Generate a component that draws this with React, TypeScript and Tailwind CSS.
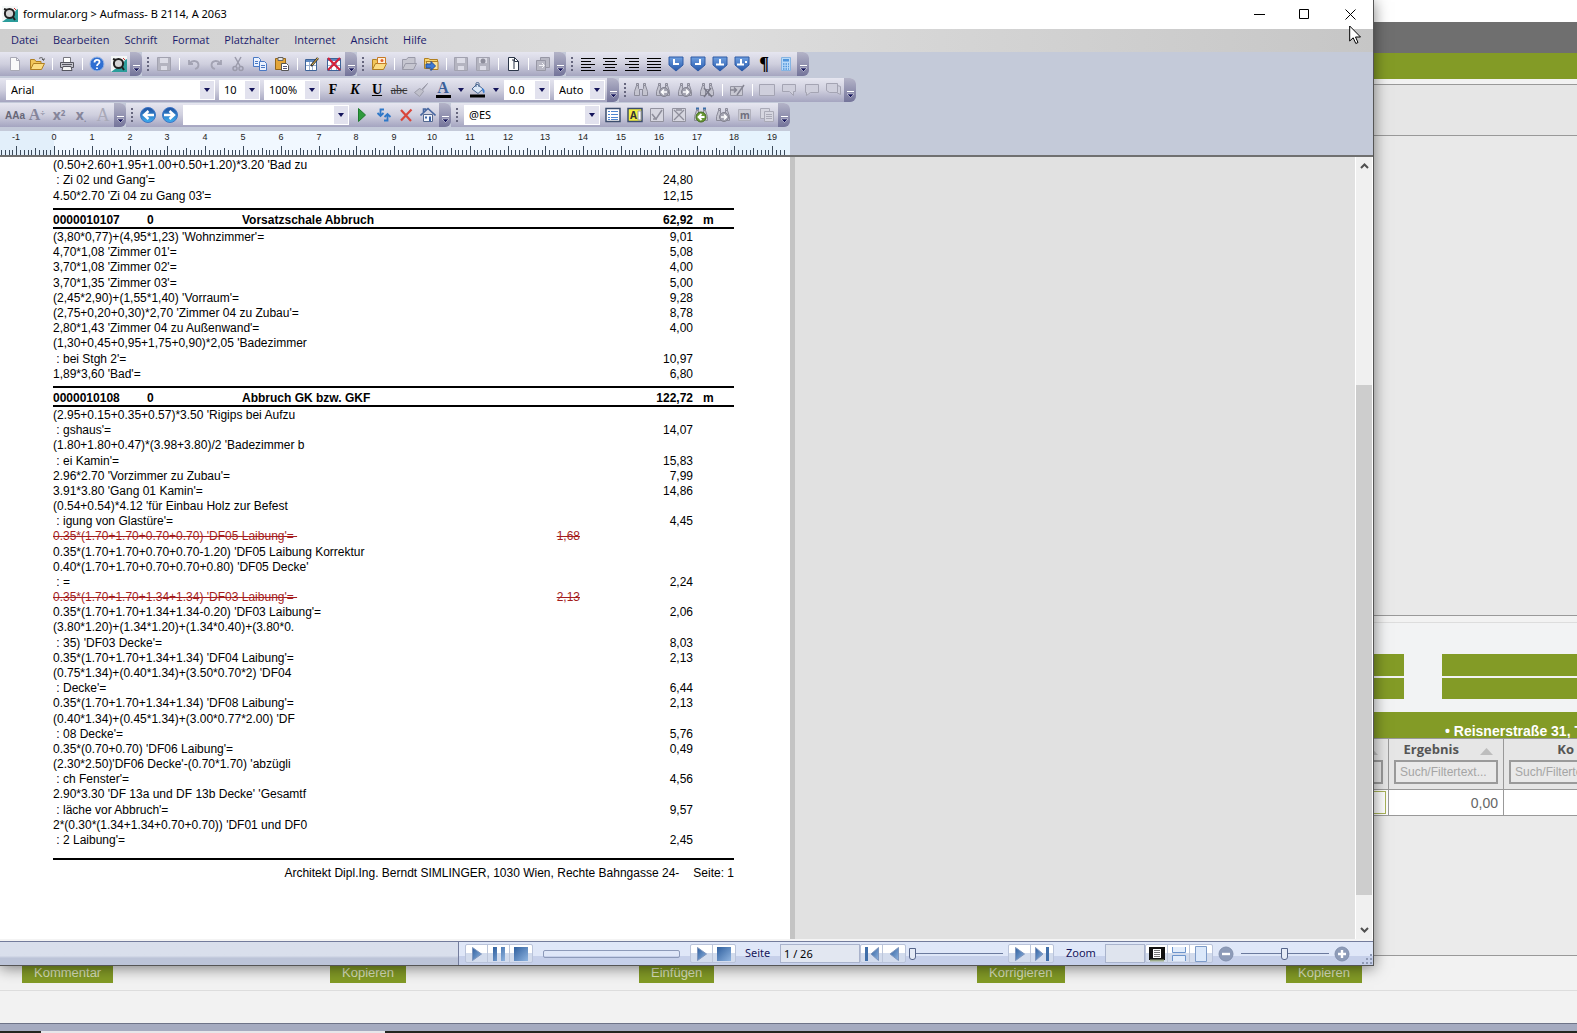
import { useState, type ReactNode } from 'react'

const TICK = 3.78 // one millimetre on the ruler
const RULER_ZERO = 54

interface Line {
    text: string
    amount?: string
    struck?: boolean
}

interface Section {
    code?: string
    title?: string
    total?: string
    height: string
    lines: Line[]
}

const SECTIONS: Section[] = [
    {
        height: 'h-[46px]',
        lines: [
            { text: "(0.50+2.60+1.95+1.00+0.50+1.20)*3.20 'Bad zu" },
            { text: " : Zi 02 und Gang'=", amount: '24,80' },
            { text: "4.50*2.70 'Zi 04 zu Gang 03'=", amount: '12,15' },
        ],
    },
    {
        code: '0000010107',
        title: 'Vorsatzschale Abbruch',
        total: '62,92',
        height: 'h-[173px]',
        lines: [
            { text: "(3,80*0,77)+(4,95*1,23) 'Wohnzimmer'=", amount: '9,01' },
            { text: "4,70*1,08 'Zimmer 01'=", amount: '5,08' },
            { text: "3,70*1,08 'Zimmer 02'=", amount: '4,00' },
            { text: "3,70*1,35 'Zimmer 03'=", amount: '5,00' },
            { text: "(2,45*2,90)+(1,55*1,40) 'Vorraum'=", amount: '9,28' },
            { text: "(2,75+0,20+0,30)*2,70 'Zimmer 04 zu Zubau'=", amount: '8,78' },
            { text: "2,80*1,43 'Zimmer 04 zu Außenwand'=", amount: '4,00' },
            { text: "(1,30+0,45+0,95+1,75+0,90)*2,05 'Badezimmer" },
            { text: " : bei Stgh 2'=", amount: '10,97' },
            { text: "1,89*3,60 'Bad'=", amount: '6,80' },
        ],
    },
    {
        code: '0000010108',
        title: 'Abbruch GK bzw. GKF',
        total: '122,72',
        height: 'h-[461px]',
        lines: [
            { text: "(2.95+0.15+0.35+0.57)*3.50 'Rigips bei Aufzu" },
            { text: " : gshaus'=", amount: '14,07' },
            { text: "(1.80+1.80+0.47)*(3.98+3.80)/2 'Badezimmer b" },
            { text: " : ei Kamin'=", amount: '15,83' },
            { text: "2.96*2.70 'Vorzimmer zu Zubau'=", amount: '7,99' },
            { text: "3.91*3.80 'Gang 01 Kamin'=", amount: '14,86' },
            { text: "(0.54+0.54)*4.12 'für Einbau Holz zur Befest" },
            { text: " : igung von Glastüre'=", amount: '4,45' },
            { text: "0.35*(1.70+1.70+0.70+0.70) 'DF05 Laibung'= ", amount: '1,68', struck: true },
            { text: "0.35*(1.70+1.70+0.70+0.70-1.20) 'DF05 Laibung Korrektur" },
            { text: "0.40*(1.70+1.70+0.70+0.70+0.80) 'DF05 Decke'" },
            { text: ' : =', amount: '2,24' },
            { text: "0.35*(1.70+1.70+1.34+1.34) 'DF03 Laibung'= ", amount: '2,13', struck: true },
            { text: "0.35*(1.70+1.70+1.34+1.34-0.20) 'DF03 Laibung'=", amount: '2,06' },
            { text: '(3.80*1.20)+(1.34*1.20)+(1.34*0.40)+(3.80*0.' },
            { text: " : 35) 'DF03 Decke'=", amount: '8,03' },
            { text: "0.35*(1.70+1.70+1.34+1.34) 'DF04 Laibung'=", amount: '2,13' },
            { text: "(0.75*1.34)+(0.40*1.34)+(3.50*0.70*2) 'DF04" },
            { text: " : Decke'=", amount: '6,44' },
            { text: "0.35*(1.70+1.70+1.34+1.34) 'DF08 Laibung'=", amount: '2,13' },
            { text: "(0.40*1.34)+(0.45*1.34)+(3.00*0.77*2.00) 'DF" },
            { text: " : 08 Decke'=", amount: '5,76' },
            { text: "0.35*(0.70+0.70) 'DF06 Laibung'=", amount: '0,49' },
            { text: "(2.30*2.50)'DF06 Decke'-(0.70*1.70) 'abzügli" },
            { text: " : ch Fenster'=", amount: '4,56' },
            { text: "2.90*3.30 'DF 13a und DF 13b Decke' 'Gesamtf" },
            { text: " : läche vor Abbruch'=", amount: '9,57' },
            { text: "2*(0.30*(1.34+1.34+0.70+0.70)) 'DF01 und DF0" },
            { text: " : 2 Laibung'=", amount: '2,45' },
        ],
    },
]

const MENUS = ['Datei', 'Bearbeiten', 'Schrift', 'Format', 'Platzhalter', 'Internet', 'Ansicht', 'Hilfe']

const binoculars = (
    <g fill="#c4c4cf" stroke="#8b8b99">
        <path d="M3.5 3.5h2v3l1 1v6h-5v-4z" />
        <path d="M10.5 3.5h2l2 6v4h-5v-6l1-1z" />
        <path d="M6.5 7.5h3M3.5 1.5h2v2h-2zM10.5 1.5h2v2h-2z" />
    </g>
)

const greyDisk = (
    <g>
        <path d="M1.5 1.5h13v13h-13z" fill="#b4b4c0" stroke="#a2a2b0" />
        <path d="M4 2h8v5H4zM5 10h6v4H5z" fill="#dcdce6" />
    </g>
)

const blueTag = <path d="M1 1h14v8l-7 6-7-6z" fill="url(#tagBlue)" stroke="#2f5ba5" />

const greyBox = <path d="M1.5 1.5h13v13h-13z" fill="#d6d6e0" stroke="#92929f" />

const folder = (
    <g stroke="#b07f22">
        <path d="M1.5 13.5v-10h4l1.5 2h5v3" fill="#f2c65a" />
        <path d="M1.5 13.5l3-6h11l-3 6z" fill="#fbdc83" />
    </g>
)

const ICONS: Record<string, ReactNode> = {
    logo: (
        <>
            <path d="M0 0h16v16H0z" fill="#f4f7f7" />
            <path d="M0 16l4-3 7-3 3-6 2-1v13z" fill="#2b9d9b" />
            <circle cx="7.5" cy="7.5" r="4.600" fill="#d5d5d5" stroke="#222" strokeWidth="2" />
            <path d="M2 3l3 1M11 11l2 3" stroke="#222" strokeWidth="2" />
            <path d="M12 2l2 2" stroke="#c33" />
        </>
    ),
    newDoc: (
        <>
            <path d="M3.5 1.5h6l3 3v10h-9z" fill="#fafafa" stroke="#a9a9b5" />
            <path d="M9.5 1.5v3h3" fill="none" stroke="#a9a9b5" />
        </>
    ),
    open: (
        <>
            {folder}
            <path d="M10 2.500c2-1.500 4-1 4.500 1.500m-1.500-1l1.500 1.500 1-2" fill="none" stroke="#555" />
        </>
    ),
    print: (
        <>
            <path d="M4.500 6V1.500h7V6" fill="#fff" stroke="#77777f" />
            <path d="M1.500 6.500h13v5h-13z" fill="#c3c3cb" stroke="#55555f" />
            <path d="M4 10.500h8l1 4H3z" fill="#f5f5f5" stroke="#55555f" />
            <path d="M3 8.500h10" stroke="#55555f" />
        </>
    ),
    help: (
        <>
            <circle cx="8" cy="8" r="7" fill="#2f6fd2" stroke="#9bb6e4" />
            <path d="M5.500 6.500c0-3.500 5-3.500 5-.5 0 2-2.500 1.800-2.500 4M8 11.500v1.500" fill="none" stroke="#fff" strokeWidth="1.800" />
        </>
    ),
    disk: greyDisk,
    undo: <path d="M3 4v4h4M3.500 7.500c3-4 9-3 9 1.500 0 2-1.500 3.500-3.500 4" fill="none" stroke="#a3a3b3" strokeWidth="1.800" />,
    redo: <path d="M13 4v4H9M12.500 7.500c-3-4-9-3-9 1.500 0 2 1.500 3.500 3.500 4" fill="none" stroke="#a3a3b3" strokeWidth="1.800" />,
    cut: (
        <g fill="none" stroke="#9b9bab" strokeWidth="1.500">
            <path d="M5 1l5 9M11 1L6 10" />
            <circle cx="5" cy="12.500" r="2" />
            <circle cx="11" cy="12.500" r="2" />
        </g>
    ),
    copy: (
        <g fill="#eaf2ff" stroke="#4a79c4">
            <path d="M1.500 1.500h5l2 2v7h-7z" />
            <path d="M7.500 5.500h5l2 2v7h-7z" />
            <path d="M9 9.500h4M9 11.500h4M3 5.500h3M3 7.500h3" />
        </g>
    ),
    paste: (
        <>
            <path d="M1.500 2.500h10v11h-10z" fill="#e3a63a" stroke="#95661a" />
            <path d="M4 1.500h5v3H4z" fill="#e6e6e6" stroke="#666" />
            <path d="M7.500 7.500h5l2 2v5h-7z" fill="#fff" stroke="#555" />
            <path d="M9 10.500h4M9 12.500h4" stroke="#557" />
        </>
    ),
    edit: (
        <>
            <path d="M1.500 3.500h11v11h-11z" fill="#fff" stroke="#3d6398" />
            <path d="M2 4h10v2H2z" fill="#5f88c0" />
            <path d="M2 9.500h10M5.500 6v8M8.500 6v8" stroke="#9db3d2" />
            <path d="M7 10l7-8" stroke="#333" strokeWidth="2.500" />
            <path d="M8 9l6-7" stroke="#f0c04a" />
        </>
    ),
    remove: (
        <>
            <path d="M1.500 2.500h13v12h-13z" fill="#fff" stroke="#3d6398" />
            <path d="M2 3h12v2H2z" fill="#5f88c0" />
            <path d="M2 9.500h12M5.500 5v9M10.500 5v9" stroke="#9db3d2" />
            <path d="M2 2l12 12M14 2L2 14" stroke="#d2203a" strokeWidth="2.200" />
        </>
    ),
    folderPic: (
        <>
            {folder}
            <path d="M6.500 1.500h8v6h-8z" fill="#fff0d8" stroke="#c77a28" />
            <circle cx="11" cy="4.500" r="1.500" fill="#e2602c" />
        </>
    ),
    folderGrey: (
        <g stroke="#9a9aa8" fill="#c6c6d0">
            <path d="M1.500 13.500v-10h4l1.500-2h7v6" />
            <path d="M1.500 13.500l3-6h11l-3 6z" />
        </g>
    ),
    folderGo: (
        <>
            <path d="M1.500 12.500v-10h4l1.500 1h7.500v9z" fill="#f8d46f" stroke="#b07f22" />
            <path d="M3 5.500h12v8H7z" fill="#fbe29b" stroke="#b07f22" />
            <path d="M3 8h5V5.500L12.500 10 8 14.500V12H3z" fill="#3f7bd6" stroke="#234f9b" />
        </>
    ),
    diskUser: (
        <>
            {greyDisk}
            <circle cx="8" cy="5" r="2.500" fill="#8e8e9b" />
        </>
    ),
    page: (
        <>
            <path d="M3.500 1.500h6l4 4v9h-10z" fill="#fff" stroke="#2b3548" />
            <path d="M7 4h2v9M9.500 1.500v4h4" fill="none" stroke="#2b3548" />
        </>
    ),
    pagesGrey: (
        <g fill="#b8b8c4" stroke="#9797a5">
            <path d="M5.500 1.500h9v10h-9z" />
            <path d="M1.500 4.500h9v10h-9z" />
            <path d="M4 9.500h5M7 7l2.500 2.500L7 12" fill="none" stroke="#f2f2f6" />
        </g>
    ),
    alignLeft: <path d="M1 2.500h14M1 5.500h10M1 8.500h14M1 11.500h10M1 14.500h14" stroke="#000" />,
    alignCenter: <path d="M1 2.500h14M3 5.500h10M1 8.500h14M3 11.500h10M1 14.500h14" stroke="#000" />,
    alignRight: <path d="M1 2.500h14M5 5.500h10M1 8.500h14M5 11.500h10M1 14.500h14" stroke="#000" />,
    justify: <path d="M1 2.500h14M1 5.500h14M1 8.500h14M1 11.500h14M1 14.500h14" stroke="#000" />,
    tabLeft: <>{blueTag}<path d="M6 3v5h5" fill="none" stroke="#fff" strokeWidth="2" /></>,
    tabRight: <>{blueTag}<path d="M10 3v5H5" fill="none" stroke="#fff" strokeWidth="2" /></>,
    tabCenter: <>{blueTag}<path d="M8 3v5M4 8.500h8" fill="none" stroke="#fff" strokeWidth="2" /></>,
    tabDecimal: <>{blueTag}<path d="M7 3v5M3 8.500h7M11 6h2" fill="none" stroke="#fff" strokeWidth="2" /></>,
    calc: (
        <>
            <path d="M3.500 1.500h9v13h-9z" fill="#b9daf8" stroke="#86b4e2" />
            <path d="M5 3h6v2.500H5z" fill="#4f95dc" />
            <path d="M5 8h6M5 10.500h6M5 13h6" stroke="#4f95dc" strokeWidth="1.500" strokeDasharray="1.500 1" />
        </>
    ),
    brush: <path d="M14.500 1.500l-6 6-2-1-5 4 5 4 4-5-1-1.500z" fill="#c0c0cb" stroke="#9c9caa" />,
    bucket: (
        <>
            <path d="M2 7l5-5 6 5-5 4.500z" fill="#dce8f8" stroke="#47658f" />
            <path d="M6 5V1.500c0-1.500 3-1.500 3 0V5" fill="none" stroke="#47658f" />
            <path d="M12 6c3 1 3 4 2 5.500-1-1-2-2.500-2-5.500z" fill="#3d7fd2" />
            <path d="M0 12.500h15v3H0z" fill="#000" />
        </>
    ),
    find: binoculars,
    findPrev: (
        <>
            {binoculars}
            <circle cx="9" cy="10" r="4.500" fill="#a3a3b0" stroke="#82828f" />
            <path d="M12 10H7m2-2.500L6.500 10 9 12.500" fill="none" stroke="#fff" strokeWidth="1.500" />
        </>
    ),
    findNext: (
        <>
            {binoculars}
            <circle cx="9" cy="10" r="4.500" fill="#a3a3b0" stroke="#82828f" />
            <path d="M6 10h5M9 7.500l2.500 2.500L9 12.500" fill="none" stroke="#fff" strokeWidth="1.500" />
        </>
    ),
    findGreen: (
        <>
            {binoculars}
            <path d="M3 1.500h3M10 1.500h3" stroke="#3c6ea8" strokeWidth="2" />
            <circle cx="8" cy="10" r="5" fill="#6b9a35" stroke="#426b1c" />
            <path d="M11.500 10H6m2.500-3L5.500 10l3 3" fill="none" stroke="#fff" strokeWidth="1.800" />
        </>
    ),
    replace: (
        <>
            {binoculars}
            <path d="M5 6l8 9M12 6l-7 9" stroke="#787886" strokeWidth="1.500" />
        </>
    ),
    goEdit: (
        <>
            <path d="M1.500 4.500h12v9h-12z" fill="#c9c9d3" stroke="#9595a3" />
            <path d="M1 8h6M5 5.500L7.500 8 5 10.500M8 13l7-10" fill="none" stroke="#858593" strokeWidth="1.500" />
        </>
    ),
    note: <path d="M0.500 2.500h15v11h-15z" fill="#cfcfdc" stroke="#a4a4b3" />,
    bubble1: <path d="M1.500 2.500h13v7h-2v4l-4-4h-7z" fill="#cfcfdc" stroke="#a4a4b3" />,
    bubble2: <path d="M2.500 2.500h13v8h-8l-4 3v-3h-1z" fill="#cfcfdc" stroke="#a4a4b3" />,
    bubble3: <path d="M1.500 1.500h11v9h-8l-3-2zM12.500 3.500l3 1v8l-4-2" fill="#cfcfdc" stroke="#a4a4b3" />,
    back: (
        <>
            <circle cx="8" cy="8" r="7.500" fill="url(#orb)" stroke="#3d74c4" />
            <path d="M14 8H5m3.500-4L4 8l4.500 4" fill="none" stroke="#fff" strokeWidth="2.400" />
        </>
    ),
    forward: (
        <>
            <circle cx="8" cy="8" r="7.500" fill="url(#orb)" stroke="#3d74c4" />
            <path d="M2 8h9M7.500 4L12 8l-4.500 4" fill="none" stroke="#fff" strokeWidth="2.400" />
        </>
    ),
    go: <path d="M4.500 1.500v13l7-6.500z" fill="#2f9a3d" stroke="#1d7a2c" />,
    refresh: (
        <g fill="none" stroke="#2f78c8" strokeWidth="1.800">
            <path d="M8 2.500H4.500v6M1.500 6l3 3 3-3" />
            <path d="M8 13.500h3.500v-6M8.500 10l3-3 3 3" />
        </g>
    ),
    stop: <path d="M3 3l10 11M13.500 2.500L3 13.500" stroke="#d9463b" strokeWidth="2.200" fill="none" />,
    home: (
        <>
            <path d="M3.500 7.500h9v7h-9z" fill="#f3f6fb" stroke="#56698e" />
            <path d="M0.500 8.500L8 1.500l7.500 7M3.500 5V2h2v1" fill="none" stroke="#4767a0" strokeWidth="1.600" />
            <path d="M5 9.500h2v2H5zM9 9.500h2v5H9z" fill="#3a62a5" />
        </>
    ),
    list: (
        <>
            <path d="M1 1.500h14v13H1z" fill="#fff" stroke="#3c4d6d" strokeWidth="1.500" />
            <path d="M3 4.500h2M6 4.500h7M3 7.500h2M6 7.500h7M3 10.500h2M6 10.500h7M3 12.500h2M6 12.500h7" stroke="#4f86d0" />
        </>
    ),
    letter: (
        <>
            <path d="M1 1.500h14v13H1z" fill="#f3ef3f" stroke="#3c4d6d" strokeWidth="1.500" />
            <path d="M11 4h3v9h-3z" fill="#fff" stroke="#99a" />
            <text x="3" y="12" className="text-[10px] font-bold fill-[#333]">A</text>
        </>
    ),
    checkGrey: <>{greyBox}<path d="M3 7l4 5 6-9M4 12h4" fill="none" stroke="#8e8e9b" strokeWidth="1.500" /></>,
    crossGrey: <>{greyBox}<path d="M3 3l10 10M13 3L3 13M5 3h6" fill="none" stroke="#8e8e9b" strokeWidth="1.300" /></>,
    mGrey: (
        <>
            <path d="M1.500 2.500h12v11h-12z" fill="#c9c9d3" stroke="#b0b0bc" />
            <text x="3" y="12" className="text-[10px] font-bold fill-[#6f6f7d]">m</text>
        </>
    ),
    copyGrey: (
        <g fill="#d6d6e0" stroke="#aaaab7">
            <path d="M1.500 1.500h9v10h-9z" />
            <path d="M5.500 4.500h9v10h-9z" />
            <path d="M7 7.500h6M7 9.500h6M7 11.500h6" />
        </g>
    ),
    play: <path d="M3.500 1.500v13l9-6.500z" fill="url(#ctl)" stroke="#7d95bd" />,
    pause: <path d="M2 1h4v14H2zM10 1h4v14h-4z" fill="url(#ctl)" />,
    halt: <path d="M1 1h14v14H1z" fill="url(#ctl)" />,
    first: <><path d="M1 1h3v14H1z" fill="#3f6ea9" /><path d="M14.500 1.500v13L7 8z" fill="url(#ctl)" stroke="#7d95bd" /></>,
    prev: <path d="M12.500 1.500v13L4 8z" fill="url(#ctl)" stroke="#7d95bd" />,
    last: <><path d="M12 1h3v14h-3z" fill="#3f6ea9" /><path d="M1.500 1.500v13L9 8z" fill="url(#ctl)" stroke="#7d95bd" /></>,
    viewPage: (
        <>
            <path d="M0 1h16v13H0z" fill="#111" />
            <path d="M4 3h8v9H4z" fill="#fff" />
            <path d="M5 4.500h6M5 6.500h6M5 8.500h6M5 10.500h6" stroke="#777" />
            <path d="M1 14.500h14" stroke="#9aaa88" strokeWidth="2" />
        </>
    ),
    viewSplit: <path d="M1.500 1v5.500h13V1M1.500 15V9.500h13V15" fill="#e3edfb" stroke="#6d94cb" />,
    viewSingle: <path d="M2.500 0.500h11v15h-11z" fill="#dbe8fa" stroke="#7d9bc8" />,
    zoomOut: (
        <>
            <circle cx="8" cy="8" r="7" fill="#8d9bb8" stroke="#8290ae" />
            <path d="M4 8h8" stroke="#fff" strokeWidth="2.400" />
        </>
    ),
    zoomIn: (
        <>
            <circle cx="8" cy="8" r="7" fill="#8d9bb8" stroke="#8290ae" />
            <path d="M4 8h8M8 4v8" stroke="#fff" strokeWidth="2.400" />
        </>
    ),
}

function Icon({ name }: { name: string }) {
    return (
        <svg viewBox="0 0 16 16" className="w-4 h-4 shrink-0" aria-hidden="true">
            {ICONS[name]}
        </svg>
    )
}

function Toolbar({ children, first }: { children: ReactNode; first?: boolean }) {
    return (
        <div
            role="toolbar"
            className={`flex items-center h-6 rounded-r-md bg-linear-to-b from-[#e6e6f0] via-[#cfcfde] to-[#a5a5c0] ${first ? '-ml-[7px]' : ''}`}
        >
            <span className="w-[11px] flex flex-col items-center gap-[2px]">
                <i className="w-[2px] h-[2px] bg-[#66667e]" />
                <i className="w-[2px] h-[2px] bg-[#66667e]" />
                <i className="w-[2px] h-[2px] bg-[#66667e]" />
                <i className="w-[2px] h-[2px] bg-[#66667e]" />
            </span>
            {children}
            <button
                aria-label="Weitere Schaltflächen"
                className="w-3 h-6 rounded-r-md bg-linear-to-b from-[#b4b4c8] to-[#74749a] flex items-end justify-center pb-1"
            >
                <svg viewBox="0 0 7 7" className="w-[7px] h-[7px]">
                    <path d="M0 .5h7" stroke="#fff" />
                    <path d="M0 3h7L3.500 6.500z" fill="#14145a" stroke="#fff" strokeWidth=".5" />
                </svg>
            </button>
        </div>
    )
}

function Tool({ name, children }: { name: string; children?: ReactNode }) {
    return (
        <button aria-label={name} className="w-[22px] h-6 flex items-center justify-center shrink-0">
            {children ?? <Icon name={name} />}
        </button>
    )
}

function Tools({ names }: { names: string[] }) {
    return (
        <>
            {names.map((n, i) => (n === '|' ? <Divider key={i} /> : <Tool key={i} name={n} />))}
        </>
    )
}

function Divider() {
    return (
        <span className="w-2 flex justify-center">
            <i className="w-px h-3 bg-white" />
        </span>
    )
}

function Arrow() {
    return (
        <svg viewBox="0 0 6 4" className="w-[6px] h-1">
            <path d="M0 0h6L3 4z" fill="#14145a" />
        </svg>
    )
}

function ArrowButton({ label }: { label: string }) {
    return (
        <button aria-label={label} className="w-[13px] h-6 flex items-center justify-center">
            <Arrow />
        </button>
    )
}

function Combo({ label, value, width }: { label: string; value: string; width: string }) {
    return (
        <div className={`relative h-5 mx-[2px] bg-white border border-white ${width}`}>
            <select aria-label={label} className="appearance-none block w-full h-full pl-1 text-[11px] leading-4 text-black bg-white outline-none">
                <option>{value}</option>
            </select>
            <span className="absolute right-0 inset-y-0 w-[14px] bg-[#e2e2ee] flex items-center justify-center pointer-events-none">
                <Arrow />
            </span>
        </div>
    )
}

function Ruler() {
    const ticks = Array.from({ length: 208 }, (_, i) => i - 14)
    const labels = Array.from({ length: 21 }, (_, i) => i - 1)
    return (
        <svg className="block w-[790px] h-6 bg-[#f1f8ff]" role="img" aria-label="Lineal">
            <path d="M0 0h54v24H0z" fill="#e2effa" />
            <path d="M730 0h60v24h-60z" fill="#e6f3fd" />
            {ticks.map(t => {
                const top = t % 10 === 0 ? 15 : t % 5 === 0 ? 17 : 19
                const x = Math.round(RULER_ZERO + t * TICK)
                if (x < 0 || x > 788) return null
                return <path key={t} d={`M${x}.5 ${top}v${24 - top}`} stroke="#3b4a5a" />
            })}
            {labels.map(n => (
                <text
                    key={n}
                    x={Math.round(RULER_ZERO + n * TICK * 10)}
                    y="9"
                    textAnchor="middle"
                    className="text-[9px] fill-[#222]"
                >
                    {n}
                </text>
            ))}
        </svg>
    )
}

function SectionTable({ section }: { section: Section }) {
    return (
        <table className={`table-fixed w-[681px] border-separate border-spacing-0 mb-[5px] leading-[14px] ${section.height}`}>
            <colgroup>
                <col className="w-[94px]" />
                <col className="w-[95px]" />
                <col className="w-[284px]" />
                <col className="w-[54px]" />
                <col className="w-[113px]" />
                <col className="w-[41px]" />
            </colgroup>
            {section.code && (
                <thead>
                    <tr className="h-[21px] text-left [&>th]:p-0 [&>th]:pt-[3px] [&>th]:border-y-2 [&>th]:border-black">
                        <th>{section.code}</th>
                        <th>0</th>
                        <th colSpan={2}>{section.title}</th>
                        <th className="text-right">{section.total}</th>
                        <th><span className="pl-[10px]">m</span></th>
                    </tr>
                </thead>
            )}
            <tbody>
                {section.lines.map((line, i) => (
                    <tr key={i} className={`[&>td]:p-0 [&>td]:pt-px ${line.struck ? 'text-[#a51e1e] line-through' : ''}`}>
                        <td colSpan={3} className="whitespace-pre">{line.text}</td>
                        <td className="text-right">{line.struck ? line.amount : ''}</td>
                        <td className="text-right">{line.struck ? '' : line.amount}</td>
                        <td />
                    </tr>
                ))}
            </tbody>
        </table>
    )
}

function Slider({ label, value, width }: { label: string; value: number; width: string }) {
    return (
        <input
            type="range"
            aria-label={label}
            defaultValue={value}
            className={`appearance-none shrink-0 h-4 bg-transparent bg-linear-to-r from-[#6b7a9e] to-[#6b7a9e] bg-[length:100%_1px] bg-center bg-no-repeat [&::-webkit-slider-thumb]:appearance-none [&::-webkit-slider-thumb]:w-[7px] [&::-webkit-slider-thumb]:h-3 [&::-webkit-slider-thumb]:bg-[#e4eaf6] [&::-webkit-slider-thumb]:border [&::-webkit-slider-thumb]:border-[#55648a] [&::-webkit-slider-thumb]:rounded-b-[3px] ${width}`}
        />
    )
}

function StatusButtons({ names }: { names: string[] }) {
    return (
        <div className="flex shrink-0 h-[19px] border border-[#b9c3da] rounded-xs bg-linear-to-b from-white from-50% to-[#d3dced] to-50% divide-x divide-[#bcc6da]">
            {names.map(n => (
                <button key={n} aria-label={n} className="w-[22px] flex items-center justify-center">
                    <Icon name={n} />
                </button>
            ))}
        </div>
    )
}

function StatusBar() {
    const [page, setPage] = useState('1 / 26')
    return (
        <div className="flex h-6 shrink-0 border-t border-[#737c9c] bg-linear-to-b from-[#dfe7f8] from-60% to-[#c6d0ea] to-60% text-[#14145a] text-[11px]">
            <div className="w-[459px] shrink-0 border-r border-[#737c9c] bg-linear-to-b from-[#d9dfec] from-60% to-[#bcc4d8] to-70%" />
            <div className="flex-1 flex items-center pl-[6px]">
                <StatusButtons names={['play', 'pause', 'halt']} />
                <div className="w-[137px] shrink-0 h-2 mx-[10px] border border-[#8d9ab9] rounded-xs" />
                <StatusButtons names={['play', 'halt']} />
                <label htmlFor="page" className="w-11 shrink-0 pl-[9px]">Seite</label>
                <input
                    id="page"
                    value={page}
                    onChange={e => setPage(e.target.value)}
                    className="w-20 h-[19px] pl-[3px] bg-[#e2e7f1] border border-[#a9b3cc] text-black outline-none"
                />
                <StatusButtons names={['first', 'prev']} />
                <span className="w-[3px]" />
                <Slider label="Seite wählen" value={0} width="w-[94px]" />
                <span className="w-[5px]" />
                <StatusButtons names={['play', 'last']} />
                <label htmlFor="zoom" className="w-[51px] shrink-0 pl-3">Zoom</label>
                <input id="zoom" className="w-10 h-[19px] bg-[#dfe4ee] border border-[#a9b3cc] outline-none" />
                <StatusButtons names={['viewPage', 'viewSplit', 'viewSingle']} />
                <span className="w-[5px]" />
                <button aria-label="Verkleinern" className="w-4"><Icon name="zoomOut" /></button>
                <span className="w-[7px]" />
                <Slider label="Zoomfaktor" value={49} width="w-[88px]" />
                <span className="w-[5px]" />
                <button aria-label="Vergrößern" className="w-4"><Icon name="zoomIn" /></button>
                <svg viewBox="0 0 11 11" className="w-[11px] h-[11px] ml-auto self-end" aria-hidden="true">
                    <path d="M8 0h2v2H8zM4 4h2v2H4zM8 4h2v2H8zM0 8h2v2H0zM4 8h2v2H4zM8 8h2v2H8z" fill="#8f9ab4" />
                </svg>
            </div>
        </div>
    )
}

function FilterInput() {
    return (
        <input
            aria-label="Filter"
            placeholder="Such/Filtertext..."
            className="block w-[104px] h-6 mx-auto pl-1 border-2 border-[#9a9a9a] bg-[#e9e9e9] text-xs font-normal font-['Liberation_Sans',sans-serif] placeholder:text-[#a5a5a5] outline-none"
        />
    )
}

function HeaderCell({ title }: { title: string }) {
    return (
        <th className="p-0 border-r border-[#999] align-top">
            <div className="flex items-center justify-end h-[21px] pr-[10px] gap-[21px]">
                {title}
                <svg viewBox="0 0 13 7" className="w-[13px] h-[7px] mt-1" aria-hidden="true">
                    <path d="M6.500 0L13 7H0z" fill="#bdbdbd" />
                </svg>
            </div>
            <FilterInput />
        </th>
    )
}

// The browser application that lies behind the document window
function BackgroundApp() {
    const actions = ['Kommentar', 'Kopieren', 'Einfügen', 'Korrigieren', 'Kopieren']
    return (
        <div className="flex flex-col h-full bg-[#f2f2f2] font-['Liberation_Sans',sans-serif]">
            <div className="h-[22px] bg-white" />
            <div className="h-[31px] bg-[#6f6f6f]" />
            <div className="h-[26px] bg-[#839b26]" />
            <div className="h-[5px]" />
            <div className="h-[52px] border-y border-[#999] bg-[#e6e6e6]" />
            <div className="flex-1 border-b border-[#999] bg-[#e9e9e9]" />
            <div className="h-[7px] border-b border-[#ddd]" />
            <div className="h-[89px] pt-[31px] bg-[#f2f3f4] grid grid-cols-[1404px_1fr] gap-x-[38px] gap-y-[2px] content-start">
                <div className="h-[22px] bg-[#839b26]" />
                <div className="h-[22px] bg-[#839b26]" />
                <div className="h-[21px] bg-[#839b26]" />
                <div className="h-[21px] bg-[#839b26]" />
            </div>
            <div className="h-[26px] pl-[1445px] pt-3 bg-[#839b26] text-white text-sm leading-[14px] font-bold whitespace-nowrap overflow-hidden">
                • Reisnerstraße 31, T
            </div>
            <div className="h-[218px] bg-[#ebebeb] border-b border-[#999] overflow-hidden">
                <table className="table-fixed w-[1619px] border-separate border-spacing-0 border-t border-[#999] text-[#555]">
                    <colgroup>
                        <col className="w-[1389px]" />
                        <col className="w-[115px]" />
                        <col className="w-[115px]" />
                    </colgroup>
                    <thead>
                        <tr className="h-[50px] bg-[#e6e6e6] text-[13px] font-['Open_Sans',sans-serif]">
                            <th className="p-0 border-r border-[#999] align-top">
                                <div className="h-[21px] flex items-center justify-end pr-[10px]">
                                    <svg viewBox="0 0 13 7" className="w-[13px] h-[7px] mt-1" aria-hidden="true">
                                        <path d="M6.500 0L13 7H0z" fill="#bdbdbd" />
                                    </svg>
                                </div>
                                <input aria-label="Filter" className="block ml-auto mr-[5px] w-[104px] h-6 border-2 border-[#9a9a9a]" />
                            </th>
                            <HeaderCell title="Ergebnis" />
                            <HeaderCell title="Ko" />
                        </tr>
                    </thead>
                    <tbody>
                        <tr className="h-[27px] bg-white text-sm text-[#666] [&>td]:border-y [&>td]:border-r [&>td]:border-[#999] [&>td]:p-0">
                            <td><input aria-label="Wert" className="block ml-auto mr-[2px] w-[104px] h-[23px] border border-[#a9b35a]" /></td>
                            <td className="text-right"><span className="pr-[5px]">0,00</span></td>
                            <td />
                        </tr>
                    </tbody>
                </table>
            </div>
            <div className="h-[35px] pt-[5px] pl-[22px] border-b border-[#ddd] grid grid-cols-[308px_309px_338px_309px_1fr] justify-items-start">
                {actions.map((a, i) => (
                    <button key={i} className="h-[22px] px-3 bg-[#839b26] text-[#d9e0bd] text-[13px] leading-6">{a}</button>
                ))}
            </div>
            <div className="h-8" />
            <div className="h-2 border-t border-[#6e7488] bg-[#a5abc0]" />
            <div className="h-[2px] flex bg-[#23251f]">
                <div className="ml-[41px] w-[344px] bg-[#e6e6ea]" />
            </div>
        </div>
    )
}

export default function App() {
    return (
        <div className="relative h-screen overflow-hidden">
            <svg className="absolute w-0 h-0" aria-hidden="true">
                <defs>
                    <linearGradient id="tagBlue" x1="0" y1="0" x2="0" y2="1">
                        <stop offset="0" stopColor="#6f9fe0" />
                        <stop offset="1" stopColor="#2458ab" />
                    </linearGradient>
                    <linearGradient id="orb" x1="0" y1="0" x2="0" y2="1">
                        <stop offset="0" stopColor="#1d4f9f" />
                        <stop offset="1" stopColor="#3fb1f2" />
                    </linearGradient>
                    <linearGradient id="ctl" x1="0" y1="0" x2="1" y2="1">
                        <stop offset="0" stopColor="#2f5f9e" />
                        <stop offset="1" stopColor="#8fb4e0" />
                    </linearGradient>
                </defs>
            </svg>
            <BackgroundApp />

            <div className="absolute top-0 left-0 right-[203px] bottom-[67px] flex flex-col bg-[#c4cad9] border-r border-b border-[#555] shadow-[0_2px_14px_rgba(0,0,0,0.5)] font-['Noto_Sans',sans-serif]">
                <header className="h-[29px] shrink-0 flex items-center pb-px bg-white text-[11px] text-black">
                    <span className="ml-[2px] mr-[5px]"><Icon name="logo" /></span>
                    <h1 className="flex-1">formular.org &gt; Aufmass- B 2114, A 2063</h1>
                    <button aria-label="Minimieren" className="w-[46px] flex justify-center">
                        <svg viewBox="0 0 11 11" className="w-[11px] h-[11px]"><path d="M0 5.500h11" stroke="#000" /></svg>
                    </button>
                    <button aria-label="Maximieren" className="w-[45px] flex justify-center">
                        <svg viewBox="0 0 11 11" className="w-[11px] h-[11px]"><path d="M.5.5h9v9h-9z" fill="none" stroke="#000" /></svg>
                    </button>
                    <button aria-label="Schließen" className="w-[46px] flex justify-center">
                        <svg viewBox="0 0 11 11" className="w-[11px] h-[11px]"><path d="M.5.5l10 10M10.500.5l-10 10" stroke="#000" /></svg>
                    </button>
                </header>

                <nav className="h-[23px] shrink-0 flex items-center gap-[15px] pl-[11px] bg-linear-to-r from-[#cfcfcf] via-[#dedede] to-[#c6c6c6] text-[11px] text-[#1b1b6b] font-['Open_Sans',sans-serif]">
                    {MENUS.map(m => (
                        <button key={m}>{m}</button>
                    ))}
                </nav>

                <div className="h-[26px] shrink-0 flex">
                    <Toolbar first>
                        <Tools names={['newDoc', 'open', '|', 'print', '|', 'help', 'logo']} />
                    </Toolbar>
                    <Toolbar>
                        <Tools names={['disk', '|', 'undo', 'redo', 'cut', 'copy', 'paste', '|', 'edit', 'remove']} />
                    </Toolbar>
                    <Toolbar>
                        <Tools names={['folderPic', '|', 'folderGrey', 'folderGo', '|', 'disk', 'diskUser', '|', 'page', '|', 'pagesGrey']} />
                    </Toolbar>
                    <Toolbar>
                        <Tools names={['alignLeft', 'alignCenter', 'alignRight', 'justify', 'tabLeft', 'tabRight', 'tabCenter', 'tabDecimal']} />
                        <Tool name="Absatzmarken"><span className="text-lg leading-5 font-bold font-['Liberation_Serif',serif]">¶</span></Tool>
                        <Tools names={['calc']} />
                    </Toolbar>
                </div>

                <div className="h-[25px] shrink-0 flex">
                    <Toolbar first>
                        <Combo label="Schriftart" value="Arial" width="w-[209px]" />
                        <Combo label="Schriftgröße" value="10" width="w-[41px]" />
                        <Combo label="Laufweite" value="100%" width="w-[56px]" />
                        <Tool name="Fett"><b className="text-sm font-['Liberation_Serif',serif]">F</b></Tool>
                        <Tool name="Kursiv"><b className="text-sm italic font-['Liberation_Serif',serif]">K</b></Tool>
                        <Tool name="Unterstrichen"><b className="text-sm underline font-['Liberation_Serif',serif]">U</b></Tool>
                        <Tool name="Durchgestrichen"><span className="text-xs line-through text-[#333] font-['Liberation_Serif',serif]">abc</span></Tool>
                        <Tool name="brush" />
                        <Tool name="Schriftfarbe">
                            <span className="w-[15px] h-4 border-b-3 border-black text-base leading-3 font-bold text-[#3b5f9a] font-['Liberation_Serif',serif]">A</span>
                        </Tool>
                        <ArrowButton label="Schriftfarbe wählen" />
                        <Tool name="bucket" />
                        <ArrowButton label="Füllfarbe wählen" />
                        <Combo label="Einzug" value="0.0" width="w-[46px]" />
                        <Combo label="Zeilenabstand" value="Auto" width="w-[51px]" />
                    </Toolbar>
                    <Toolbar>
                        <Tools names={['find', 'findPrev', 'findNext', 'replace', '|', 'goEdit', '|', 'note', 'bubble1', 'bubble2', 'bubble3']} />
                    </Toolbar>
                </div>

                <div className="h-[25px] shrink-0 flex text-[#85859a]">
                    <Toolbar first>
                        <Tool name="Großschreibung"><b className="text-[10px] text-[#666676] font-['Liberation_Sans',sans-serif]">AAa</b></Tool>
                        <Tool name="Größer"><b className="text-base leading-5 font-['Liberation_Serif',serif]">A<sup className="text-[9px]">÷</sup></b></Tool>
                        <Tool name="Hochgestellt"><b className="text-sm leading-5">x<sup className="text-[8px]">2</sup></b></Tool>
                        <Tool name="Tiefgestellt"><b className="text-sm leading-5">x<sub className="text-[8px]">.</sub></b></Tool>
                        <Tool name="Kontur"><span className="text-lg leading-5 text-[#a9a9b8] font-['Liberation_Serif',serif]">A</span></Tool>
                    </Toolbar>
                    <Toolbar>
                        <Tools names={['back', 'forward']} />
                        <Combo label="Adresse" value="" width="w-[166px]" />
                        <Tools names={['go', 'refresh', 'stop', 'home']} />
                    </Toolbar>
                    <Toolbar>
                        <Combo label="Platzhalter" value="@ES" width="w-[136px]" />
                        <Tools names={['list', 'letter', 'checkGrey', 'crossGrey', 'findGreen', 'findNext', 'mGrey', 'copyGrey']} />
                    </Toolbar>
                </div>

                <div className="shrink-0 pt-[3px] border-b-2 border-[#707070] font-['Liberation_Sans',sans-serif]">
                    <Ruler />
                </div>

                <div className="flex-1 min-h-0 flex bg-[#e1e1e1]">
                    <main className="w-[795px] pl-[53px] bg-white border-r-5 border-[#c4c4c4] text-xs text-black font-['Liberation_Sans',sans-serif] overflow-hidden">
                        {SECTIONS.map((s, i) => (
                            <SectionTable key={i} section={s} />
                        ))}
                        <footer className="w-[681px] mt-[11px] pt-[5px] border-t-2 border-black flex justify-end gap-[14px] leading-4">
                            <span>Architekt Dipl.Ing. Berndt SIMLINGER, 1030 Wien, Rechte Bahngasse 24-</span>
                            <span>Seite: 1</span>
                        </footer>
                    </main>
                    <div className="ml-auto w-[18px] flex flex-col items-center bg-[#f0f0f0] border-x border-white">
                        <svg viewBox="0 0 9 6" className="w-[9px] h-[6px] my-[6px]" aria-hidden="true">
                            <path d="M1 5l3.500-3.500L8 5" fill="none" stroke="#505050" strokeWidth="2" />
                        </svg>
                        <div className="mt-[210px] mb-8 flex-1 w-full bg-[#cdcdcd]" />
                        <svg viewBox="0 0 9 6" className="w-[9px] h-[6px] mb-[6px]" aria-hidden="true">
                            <path d="M1 1l3.500 3.500L8 1" fill="none" stroke="#505050" strokeWidth="2" />
                        </svg>
                    </div>
                </div>

                <div className="h-[2px] shrink-0 bg-[#f4f4f4]" />
                <StatusBar />
            </div>

            <svg viewBox="0 0 13 20" className="absolute top-[25px] right-[215px] w-[13px] h-5" aria-hidden="true">
                <path d="M.7 1v15l3.500-3.200 2.600 5.700 2.200-1-2.500-5.500h5z" fill="#fff" stroke="#000" />
            </svg>
        </div>
    )
}
